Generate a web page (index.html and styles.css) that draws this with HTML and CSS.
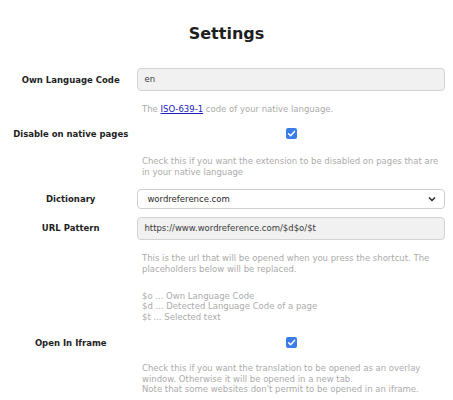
FILE: index.html
```html
<!DOCTYPE html>
<html lang="en">
<head>
<meta charset="utf-8">
<title>Settings</title>
<link rel="stylesheet" href="styles.css">
</head>
<body>
<main class="page">
  <h1 class="title">Settings</h1>

  <div class="row row-first">
    <div class="label">Own Language Code</div>
    <div class="control"><div class="input">en</div></div>
  </div>
  <div class="help"><p>The <a href="#" class="link">ISO-639-1</a> code of your native language.</p></div>

  <div class="row row-check row-after-help1">
    <div class="label">Disable on native pages</div>
    <div class="control control-center"><span class="checkbox"><svg width="11" height="11" viewBox="0 0 11 11"><polyline points="2.6,5.8 4.6,7.7 8.5,3.4" fill="none" stroke="#fff" stroke-width="1.5" stroke-linecap="round" stroke-linejoin="round"/></svg></span></div>
  </div>
  <div class="help"><p>Check this if you want the extension to be disabled on pages that are<br>in your native language</p></div>

  <div class="row row-after-help2">
    <div class="label">Dictionary</div>
    <div class="control"><div class="select"><span>wordreference.com</span><svg class="chevron" width="8" height="6" viewBox="0 0 8 6"><polyline points="1,1.5 4,4.5 7,1.5" fill="none" stroke="#222" stroke-width="1.4"/></svg></div></div>
  </div>

  <div class="row row-tight">
    <div class="label">URL Pattern</div>
    <div class="control"><div class="input">https://www.wordreference.com/$d$o/$t</div></div>
  </div>
  <div class="help help-loose">
    <p>This is the url that will be opened when you press the shortcut. The<br>placeholders below will be replaced.</p>
    <p class="para-gap">$o ... Own Language Code<br>$d ... Detected Language Code of a page<br>$t ... Selected text</p>
  </div>

  <div class="row row-check row-after-help4">
    <div class="label">Open In Iframe</div>
    <div class="control control-center"><span class="checkbox"><svg width="11" height="11" viewBox="0 0 11 11"><polyline points="2.6,5.8 4.6,7.7 8.5,3.4" fill="none" stroke="#fff" stroke-width="1.5" stroke-linecap="round" stroke-linejoin="round"/></svg></span></div>
  </div>
  <div class="help help-tight"><p>Check this if you want the translation to be opened as an overlay<br>window. Otherwise it will be opened in a new tab.<br>Note that some websites don't permit to be opened in an iframe.</p></div>
</main>
</body>
</html>
```

FILE: styles.css
```css
html, body {
  margin: 0;
  padding: 0;
  background: #ffffff;
}

body {
  font-family: "DejaVu Sans", "Liberation Sans", sans-serif;
  color: #1e1e1e;
}

.page {
  padding: 0 8px;
}

.title {
  margin: 24px 0 25px;
  font-size: 16px;
  line-height: 19px;
  font-weight: bold;
  text-align: center;
  color: #1e1e1e;
}

.row {
  display: flex;
  align-items: center;
  height: 23px;
}

.row-check {
  height: 19px;
}

.row-after-help1 { margin-top: 9.5px; }
.row-after-help2 { margin-top: 10.5px; }
.row-tight { margin-top: 6px; }
.row-after-help4 { margin-top: 11px; }

.label {
  width: 126px;
  text-align: center;
  font-size: 8.5px;
  font-weight: bold;
  color: #1e1e1e;
}

.control {
  width: 309px;
  margin-left: 4px;
  display: flex;
  align-items: center;
}

.control-center {
  justify-content: center;
}

.input {
  box-sizing: border-box;
  width: 100%;
  height: 23px;
  padding: 0 6px;
  border: 1px solid #d3d3d3;
  border-radius: 4px;
  background: #f1f1f1;
  font-size: 8.5px;
  line-height: 21px;
  color: #3a3a3a;
}

.select {
  box-sizing: border-box;
  width: 100%;
  height: 20px;
  padding: 0 8px 0 9px;
  border: 1px solid #cfcfcf;
  border-radius: 4px;
  background: #ffffff;
  display: flex;
  align-items: center;
  justify-content: space-between;
  font-size: 8.5px;
  color: #2a2a2a;
}

.chevron {
  display: block;
}

.checkbox {
  display: block;
  width: 11px;
  height: 11px;
  border-radius: 2px;
  background: #3b7de8;
}

.checkbox svg {
  display: block;
}

.help {
  margin: 13px 0 0 130px;
  padding-left: 4px;
  font-size: 8.5px;
  line-height: 10.5px;
  color: #ababab;
  white-space: nowrap;
}

.help p {
  margin: 0;
}

.help-loose {
  margin-top: 13.5px;
}

.help-tight {
  margin-top: 11px;
}

.para-gap {
  margin-top: 16.5px !important;
}

.link {
  color: #2020c0;
  text-decoration: underline;
}
```
